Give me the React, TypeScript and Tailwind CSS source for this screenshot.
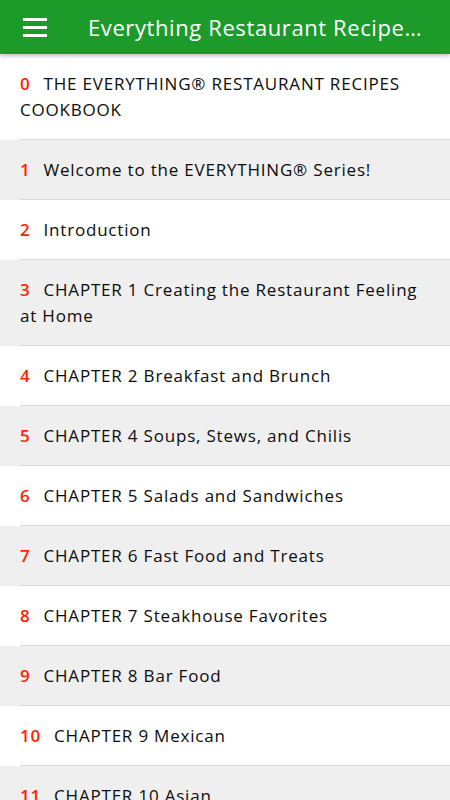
import React from 'react';

const chapters: string[] = [
  'THE EVERYTHING® RESTAURANT RECIPES COOKBOOK',
  'Welcome to the EVERYTHING® Series!',
  'Introduction',
  'CHAPTER 1 Creating the Restaurant Feeling at Home',
  'CHAPTER 2 Breakfast and Brunch',
  'CHAPTER 4 Soups, Stews, and Chilis',
  'CHAPTER 5 Salads and Sandwiches',
  'CHAPTER 6 Fast Food and Treats',
  'CHAPTER 7 Steakhouse Favorites',
  'CHAPTER 8 Bar Food',
  'CHAPTER 9 Mexican',
  'CHAPTER 10 Asian',
  'CHAPTER 11 Italian',
  'CHAPTER 12 Seafood',
];

const App: React.FC = () => {
  return (
    <div
      className="flex flex-col h-[800px] w-[450px] overflow-hidden bg-white"
      style={{ fontFamily: '"Open Sans", "Liberation Sans", sans-serif' }}
    >
      <header className="relative z-10 flex items-center h-[54px] shrink-0 bg-[#1c9b2b] shadow-[0_2px_4px_rgba(0,0,0,0.25)]">
        <button className="flex flex-col gap-[5px] pl-[23px] pr-[41px]">
          <span className="block w-[24px] h-[3px] bg-white"></span>
          <span className="block w-[24px] h-[3px] bg-white"></span>
          <span className="block w-[24px] h-[3px] bg-white"></span>
        </button>
        <h1 className="flex-1 min-w-0 pr-[20px] truncate text-white text-[22px] leading-[30px] tracking-[0.6px]">
          Everything Restaurant Recipes Cookbook
        </h1>
      </header>

      <ul className="flex-1">
        {chapters.map((title, i) => (
          <li key={i} className={i % 2 === 0 ? 'bg-white' : 'bg-[#efefef]'}>
            <div className="pl-[20px] pr-[20px] pt-[17px] pb-[16px] text-[17px] leading-[26px] tracking-[0.8px] text-[#0c0c0c]">
              <span className="text-[#ff2200] font-semibold mr-[13px]">{i}</span>
              {title}
            </div>
            <div className="ml-[20px] h-px bg-[#d8d8d8]"></div>
          </li>
        ))}
      </ul>
    </div>
  );
};

export default App;
